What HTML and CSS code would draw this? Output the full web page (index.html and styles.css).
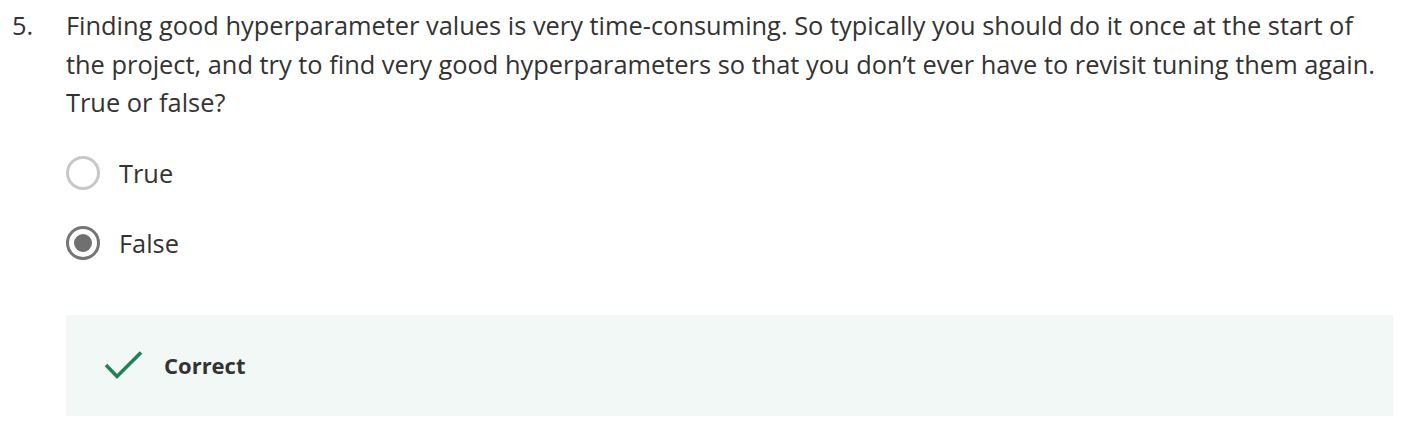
FILE: index.html
```html
<!DOCTYPE html>
<html>
<head>
<meta charset="utf-8">
<link rel="stylesheet" href="styles.css">
</head>
<body>
<div class="question">
  <div class="num">5.</div>
  <div class="content">
    <div class="prompt">Finding good hyperparameter values is very time-consuming. So typically you should do it once at the start of the project, and try to find very good hyperparameters so that you don’t ever have to revisit tuning them again. True or false?</div>
    <div class="options">
      <div class="option">
        <span class="radio"></span>
        <span class="label">True</span>
      </div>
      <div class="option">
        <span class="radio checked"></span>
        <span class="label">False</span>
      </div>
    </div>
    <div class="feedback">
      <svg class="check" width="40" height="30" viewBox="0 0 40 30">
        <path d="M2 15 L13 26.5 L37 2.5" fill="none" stroke="#1f8354" stroke-width="3.6"/>
      </svg>
      <span class="fb-text">Correct</span>
    </div>
  </div>
</div>
</body>
</html>
```
FILE: styles.css
```css
body {
  margin: 0;
  font-family: "Open Sans", "Liberation Sans", sans-serif;
  color: #333333;
  background: #ffffff;
}
.question {
  display: flex;
  padding: 6px 0 0 12px;
}
.num {
  width: 54px;
  font-size: 25.4px;
  line-height: 38.5px;
}
.content {
  width: 1327px;
}
.prompt {
  font-size: 25.4px;
  line-height: 38.5px;
}
.options {
  display: flex;
  flex-direction: column;
  gap: 36px;
  margin-top: 34px;
}
.option {
  display: flex;
  align-items: center;
  height: 34px;
}
.radio {
  box-sizing: border-box;
  width: 34px;
  height: 34px;
  border-radius: 50%;
  border: 3px solid #c7c7c7;
  margin-right: 19px;
  position: relative;
}
.radio.checked {
  border-color: #757575;
}
.radio.checked::after {
  content: "";
  position: absolute;
  left: 5px;
  top: 5px;
  width: 18px;
  height: 18px;
  border-radius: 50%;
  background: #707070;
}
.label {
  font-size: 25.4px;
}
.feedback {
  margin-top: 55px;
  height: 101px;
  background: #f2f8f6;
  display: flex;
  align-items: center;
  padding-left: 38px;
}
.check {
  margin-right: 20px;
}
.fb-text {
  font-size: 22px;
  font-weight: 700;
}
```
